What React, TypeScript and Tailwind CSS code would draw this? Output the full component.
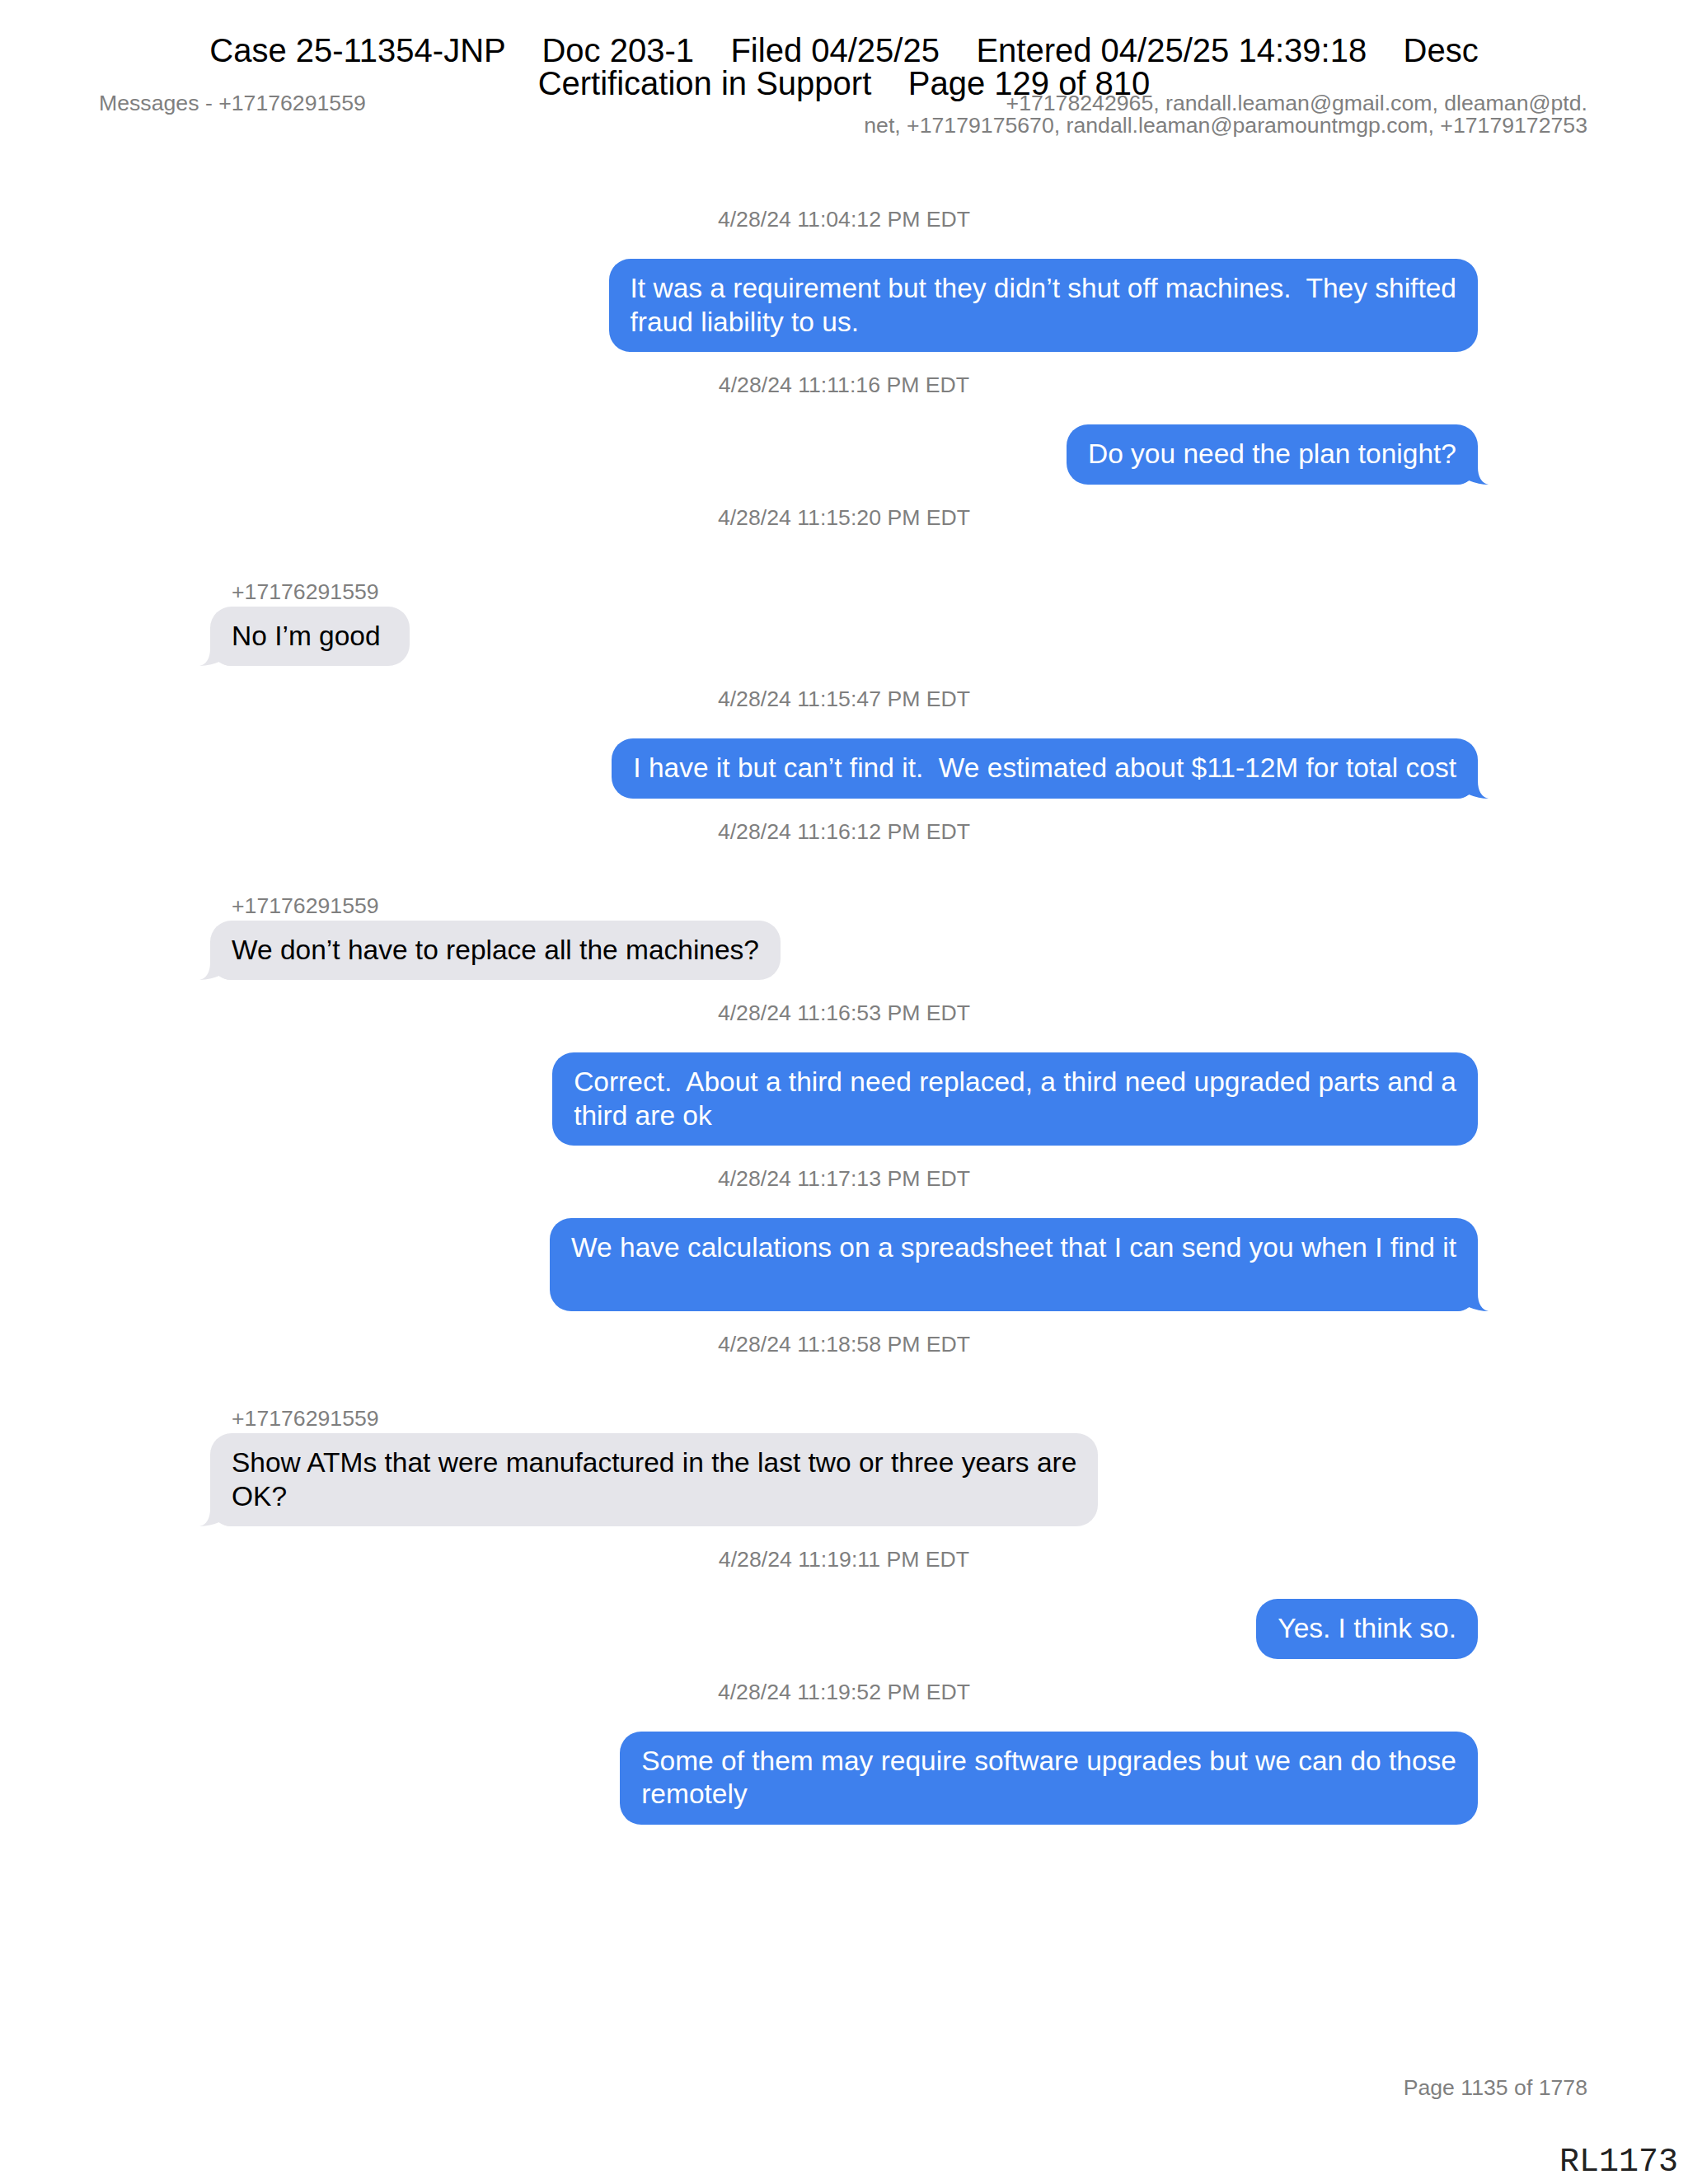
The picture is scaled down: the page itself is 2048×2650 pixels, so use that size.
import React from "react";

type Item =
  | { kind: "ts"; text: string }
  | { kind: "out"; lines: string[]; tail?: boolean }
  | { kind: "in"; lines: string[] };

const items: Item[] = [
  { kind: "ts", text: "4/28/24 11:04:12 PM EDT" },
  {
    kind: "out",
    lines: [
      "It was a requirement but they didn\u2019t shut off machines.  They shifted",
      "fraud liability to us.",
    ],
  },
  { kind: "ts", text: "4/28/24 11:11:16 PM EDT" },
  { kind: "out", lines: ["Do you need the plan tonight?"], tail: true },
  { kind: "ts", text: "4/28/24 11:15:20 PM EDT" },
  { kind: "in", lines: ["No I\u2019m good "] },
  { kind: "ts", text: "4/28/24 11:15:47 PM EDT" },
  {
    kind: "out",
    lines: ["I have it but can\u2019t find it.  We estimated about $11-12M for total cost"],
    tail: true,
  },
  { kind: "ts", text: "4/28/24 11:16:12 PM EDT" },
  { kind: "in", lines: ["We don\u2019t have to replace all the machines?"] },
  { kind: "ts", text: "4/28/24 11:16:53 PM EDT" },
  {
    kind: "out",
    lines: [
      "Correct.  About a third need replaced, a third need upgraded parts and a",
      "third are ok",
    ],
  },
  { kind: "ts", text: "4/28/24 11:17:13 PM EDT" },
  {
    kind: "out",
    lines: [
      "We have calculations on a spreadsheet that I can send you when I find it",
      "\u00a0",
    ],
    tail: true,
  },
  { kind: "ts", text: "4/28/24 11:18:58 PM EDT" },
  {
    kind: "in",
    lines: ["Show ATMs that were manufactured in the last two or three years are", "OK?"],
  },
  { kind: "ts", text: "4/28/24 11:19:11 PM EDT" },
  { kind: "out", lines: ["Yes. I think so."] },
  { kind: "ts", text: "4/28/24 11:19:52 PM EDT" },
  {
    kind: "out",
    lines: ["Some of them may require software upgrades but we can do those", "remotely"],
  },
];

const BLUE = "#3e80ed";
const GRAY = "#e5e5ea";

function OutTail() {
  return (
    <svg
      className="absolute right-[-15px] bottom-0"
      width="45"
      height="30"
      viewBox="-30 -30 45 30"
    >
      <path
        d="M -30 -30 L 0 -30 L 0 -22 Q 0 -3 13 0 Q 1 0 -11 -5 Q -17 0 -25 0 L -30 0 Z"
        fill={BLUE}
      />
    </svg>
  );
}

function InTail() {
  return (
    <svg
      className="absolute left-[-15px] bottom-0"
      width="45"
      height="30"
      viewBox="-15 -30 45 30"
    >
      <path
        d="M 30 -30 L 0 -30 L 0 -22 Q 0 -3 -13 0 Q -1 0 11 -5 Q 17 0 25 0 L 30 0 Z"
        fill={GRAY}
      />
    </svg>
  );
}

function Row({ item, first }: { item: Item; first: boolean }) {
  if (item.kind === "ts") {
    return (
      <div
        className={
          "h-[34px] text-center text-[26.67px] leading-[34px] text-[#7f7f7f] " +
          (first ? "" : "mt-[23px]")
        }
      >
        {item.text}
      </div>
    );
  }
  if (item.kind === "out") {
    return (
      <div className="mt-[31px] flex justify-end">
        <div className="relative whitespace-pre rounded-[26px] bg-[#3e80ed] px-[26px] py-4 text-[33.5px] leading-[40.5px] text-white">
          {item.lines.map((l, i) => (
            <div key={i} className="relative z-10">
              {l}
            </div>
          ))}
          {item.tail && <OutTail />}
        </div>
      </div>
    );
  }
  return (
    <div className="flex flex-col items-start">
      <div className="mt-[60px] pl-[26px] text-[26.67px] leading-[27px] text-[#7f7f7f]">
        +17176291559
      </div>
      <div className="relative mt-[4px] whitespace-pre rounded-[26px] bg-[#e5e5ea] px-[26px] py-4 text-[33.5px] leading-[40.5px] text-black">
        {item.lines.map((l, i) => (
          <div key={i} className="relative z-10">
            {l}
          </div>
        ))}
        <InTail />
      </div>
    </div>
  );
}

export default function App() {
  return (
    <div
      className="relative flex h-[2650px] w-[2048px] flex-col overflow-hidden bg-white"
      style={{ fontFamily: '"Liberation Sans", Arial, Helvetica, sans-serif' }}
    >
      {/* Court filing stamp overlay */}
      <div className="absolute left-0 right-0 top-[41px] z-20 text-center text-[40px] leading-[40px] text-black">
        <div className="whitespace-pre">
          {"Case 25-11354-JNP    Doc 203-1    Filed 04/25/25    Entered 04/25/25 14:39:18    Desc"}
        </div>
        <div className="whitespace-pre">{"Certification in Support    Page 129 of 810"}</div>
      </div>

      {/* Page header */}
      <div className="flex items-start justify-between px-[120px] pr-[122px] pt-[112px] text-[26.67px] leading-[27px] text-[#7f7f7f]">
        <div>Messages - +17176291559</div>
        <div className="text-right">
          <div>+17178242965, randall.leaman@gmail.com, dleaman@ptd.</div>
          <div>net, +17179175670, randall.leaman@paramountmgp.com, +17179172753</div>
        </div>
      </div>

      {/* Messages */}
      <div className="mt-[83px] flex flex-col px-[255px]">
        {items.map((it, i) => (
          <Row key={i} item={it} first={i === 0} />
        ))}
      </div>

      {/* Footer */}
      <div className="mt-auto flex flex-col items-end">
        <div className="pr-[122px] text-[26.67px] leading-[27px] text-[#7f7f7f]">
          Page 1135 of 1778
        </div>
        <div
          className="mt-[57px] mb-[6px] pr-[12px] text-[40px] leading-[40px] text-[#222]"
          style={{ fontFamily: '"Liberation Mono", "Courier New", monospace' }}
        >
          RL1173
        </div>
      </div>
    </div>
  );
}
